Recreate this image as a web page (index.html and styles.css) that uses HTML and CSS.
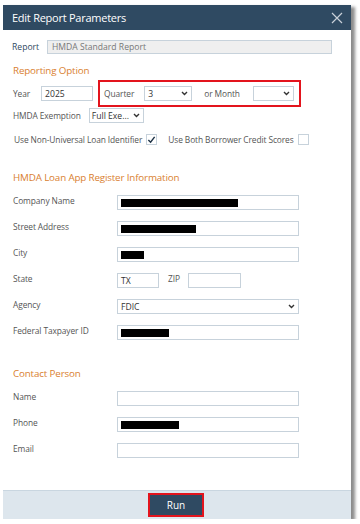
FILE: index.html
```html
<!DOCTYPE html>
<html lang="en">
<head>
  <meta charset="UTF-8">
  <title>Edit Report Parameters</title>
  <link rel="stylesheet" href="styles.css">
</head>
<body>

  <div class="dialog">
    <div class="dlg-head">
      <span class="dlg-title">Edit Report Parameters</span>
      <svg class="dlg-close" width="12" height="12" viewBox="0 0 12 12"><path d="M1 1L11 11M11 1L1 11" stroke="#c9d1d9" stroke-width="1.2" fill="none"/></svg>
    </div>

    <div class="dlg-body">
      <div class="report-row">
        <span class="report-label">Report</span>
        <div class="field readonly report-input">HMDA Standard Report</div>
      </div>

      <h2 class="section first">Reporting Option</h2>

      <div class="period-row">
        <span class="lbl">Year</span>
        <div class="field year-input">2025</div>
        <div class="highlight">
          <span class="lbl">Quarter</span>
          <div class="field select quarter-sel"><span>3</span><svg width="7" height="5" viewBox="0 0 7 5"><path d="M1 1L3.5 3.5L6 1" stroke="#333" stroke-width="1.4" fill="none"/></svg></div>
          <span class="lbl month-lbl">or Month</span>
          <div class="field select month-sel"><span></span><svg width="7" height="5" viewBox="0 0 7 5"><path d="M1 1L3.5 3.5L6 1" stroke="#333" stroke-width="1.4" fill="none"/></svg></div>
        </div>
      </div>

      <div class="exempt-row">
        <span class="lbl">HMDA Exemption</span>
        <div class="field select exempt-sel"><span>Full Exe...</span><svg width="7" height="5" viewBox="0 0 7 5"><path d="M1 1L3.5 3.5L6 1" stroke="#333" stroke-width="1.4" fill="none"/></svg></div>
      </div>

      <div class="check-row">
        <span class="lbl">Use Non-Universal Loan Identifier</span>
        <span class="check"><svg width="10" height="10" viewBox="0 0 10 10"><path d="M1.5 5L4 7.5L8.5 1.5" stroke="#1f3347" stroke-width="1.6" fill="none"/></svg></span>
        <span class="lbl both-lbl">Use Both Borrower Credit Scores</span>
        <span class="check"></span>
      </div>

      <h2 class="section">HMDA Loan App Register Information</h2>

      <div class="fields">
        <span class="lbl">Company Name</span>
        <div class="field wide"><i class="redact" style="width:117px"></i></div>
        <span class="lbl">Street Address</span>
        <div class="field wide"><i class="redact" style="width:75px"></i></div>
        <span class="lbl">City</span>
        <div class="field wide"><i class="redact" style="width:23px"></i></div>
        <span class="lbl">State</span>
        <div class="state-zip">
          <div class="field state-input">TX</div>
          <span class="lbl zip-lbl">ZIP</span>
          <div class="field zip-input"></div>
        </div>
        <span class="lbl">Agency</span>
        <div class="field select wide"><span>FDIC</span><svg width="7" height="5" viewBox="0 0 7 5"><path d="M1 1L3.5 3.5L6 1" stroke="#333" stroke-width="1.4" fill="none"/></svg></div>
        <span class="lbl">Federal Taxpayer ID</span>
        <div class="field wide"><i class="redact" style="width:48px"></i></div>
      </div>

      <h2 class="section contact">Contact Person</h2>

      <div class="fields">
        <span class="lbl">Name</span>
        <div class="field wide"></div>
        <span class="lbl">Phone</span>
        <div class="field wide"><i class="redact" style="width:58px"></i></div>
        <span class="lbl">Email</span>
        <div class="field wide"></div>
      </div>
    </div>

    <div class="dlg-foot">
      <button class="run">Run</button>
    </div>
  </div>

</body>
</html>
```

FILE: styles.css
```css
body { margin: 0; background: #fff; font-family: "Open Sans", "Noto Sans", sans-serif; color: #555; }

.dialog { width: 348px; margin: 5px 0 0 3px; background: #fff; box-shadow: 4px 2px 3px rgba(0,0,0,0.45); }

.dlg-head { height: 25px; background: #2f4a62; display: flex; align-items: center; justify-content: space-between; padding: 0 8px 0 9px; }
.dlg-title { color: #fff; font-size: 11px; letter-spacing: -0.25px; }
.dlg-close { display: block; }

.dlg-body { padding: 10px 0 32px 10px; }

.lbl { font-size: 8.4px; letter-spacing: -0.1px; color: #555; white-space: nowrap; }

.field { box-sizing: border-box; height: 15px; border: 1px solid #c7d2db; background: #fff; font-size: 8.6px; color: #333; padding: 0 3px; display: flex; align-items: center; }
.field.readonly { background: #efefef; color: #777; }
.select { justify-content: space-between; }
.select svg { flex: none; }
.redact { display: block; height: 8px; background: #000; }

.report-row { display: flex; align-items: center; height: 14px; }
.report-label { font-size: 8.6px; color: #2f4a62; width: 35px; margin-left: -1px; }
.report-input { width: 285px; height: 14px; padding-left: 4px; }

.section { margin: 0; font-weight: normal; font-size: 9.8px; letter-spacing: -0.15px; color: #d9802f; height: 13px; line-height: 13px; }
.section.first { margin-top: 10px; }

.period-row { display: flex; align-items: center; margin-top: 3px; }
.year-input { width: 52px; margin-left: 11px; }
.highlight { display: flex; align-items: center; height: 27px; box-sizing: border-box; border: 2px solid #e3141d; margin-left: 5px; padding: 0 5px 0 4px; }
.quarter-sel { width: 48px; margin-left: 10px; }
.month-lbl { margin-left: 12px; }
.month-sel { width: 41px; margin-left: 13px; }

.exempt-row { display: flex; align-items: center; height: 15px; margin-top: 1px; }
.exempt-sel { width: 55px; margin-left: 8px; padding-left: 2px; }

.check-row { display: flex; align-items: center; margin-top: 11px; padding-left: 1px; }
.check { box-sizing: border-box; width: 11px; height: 11px; border: 1px solid #c7d2db; margin-left: 4px; display: flex; align-items: center; justify-content: center; }
.both-lbl { margin-left: 11px; }

.section + .fields { margin-top: 11px; }
.check-row + .section { margin-top: 26px; }
.section.contact { margin-top: 27px; }

.fields { display: grid; grid-template-columns: 104px 182px; grid-auto-rows: 15px; row-gap: 11px; align-items: center; }
.fields .lbl { align-self: start; line-height: 12px; }
.wide { width: 182px; }

.state-zip { display: flex; align-items: center; }
.state-input { width: 42px; }
.zip-lbl { margin-left: 9px; }
.zip-input { width: 53px; margin-left: 8px; }

.dlg-foot { height: 28px; background: #dde6ed; border-top: 1px solid #c9d6e0; display: flex; justify-content: center; align-items: center; padding-right: 2px; }
.run { width: 56px; height: 24px; background: #2f4a62; color: #fff; border: 2px solid #e3141d; font-family: "Open Sans", sans-serif; font-size: 10px; padding: 0; }
```
